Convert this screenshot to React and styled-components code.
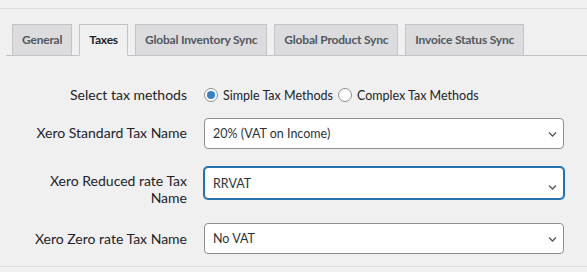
import React, { useState } from 'react';
import styled, { createGlobalStyle } from 'styled-components';

const GlobalStyle = createGlobalStyle`
    body {
        margin: 0;
        background: #f0f0f1;
        font-family: Lato, "Liberation Sans", sans-serif;
        color: #1d2327;
    }
`;

const Page = styled.div`
    padding-top: 8px;
`;

const TopRule = styled.div`
    border-top: 1px solid #dcdcde;
`;

const TabBar = styled.nav`
    display: flex;
    gap: 7px;
    margin: 15px 0 0 6px;
    padding-left: 6px;
    border-bottom: 1px solid #c3c4c7;
`;

const Tab = styled.a`
    display: block;
    height: 32px;
    box-sizing: border-box;
    padding: 0 9px;
    line-height: 30px;
    font-size: 12px;
    font-weight: 700;
    letter-spacing: -0.2px;
    text-decoration: none;
    white-space: nowrap;
    border: 1px solid #c3c4c7;
    margin-bottom: -1px;
    color: ${(p) => (p.active ? '#1d2327' : '#50575e')};
    background: ${(p) => (p.active ? '#f0f0f1' : '#dcdcde')};
    border-bottom-color: ${(p) => (p.active ? '#f0f0f1' : '#c3c4c7')};
`;

const FormTable = styled.div`
    display: grid;
    grid-template-columns: 160px 360px;
    column-gap: 17px;
    padding: 29px 0 12px 27px;
    border-bottom: 1px solid #dcdcde;
`;

const Label = styled.label`
    text-align: right;
    font-size: 14px;
    line-height: 17px;
    padding-top: ${(p) => p.offset || 0}px;
    margin-bottom: ${(p) => p.gap || 0}px;
`;

const Field = styled.div`
    position: relative;
    margin-bottom: ${(p) => p.gap || 0}px;
`;

const RadioGroup = styled.div`
    display: flex;
    align-items: center;
    height: 20px;
    font-size: 12.5px;
`;

const RadioOption = styled.label`
    display: flex;
    align-items: center;
    gap: 5px;
    margin-right: 5px;
    cursor: pointer;
`;

const RadioDot = styled.span`
    width: 14px;
    height: 14px;
    box-sizing: border-box;
    border-radius: 50%;
    border: 1px solid #8c8f94;
    background: #fff;
    display: flex;
    align-items: center;
    justify-content: center;

    &::after {
        content: '';
        width: 8px;
        height: 8px;
        border-radius: 50%;
        background: #3582c4;
        display: ${(p) => (p.checked ? 'block' : 'none')};
    }
`;

const Select = styled.select`
    appearance: none;
    display: block;
    width: 100%;
    height: ${(p) => (p.focused ? 32 : 31)}px;
    box-sizing: border-box;
    padding: 0 24px 0 8px;
    font-family: inherit;
    font-size: 12.5px;
    color: #2c3338;
    background: #fff;
    border: 1px solid ${(p) => (p.focused ? '#2271b1' : '#8c8f94')};
    border-radius: 4px;
    box-shadow: ${(p) => (p.focused ? '0 0 0 1px #2271b1' : 'none')};
    outline: none;
`;

const Chevron = styled.svg`
    position: absolute;
    right: 7px;
    top: 50%;
    margin-top: -4px;
    width: 9px;
    height: 8px;
    pointer-events: none;
`;

const taxOptions = {
    standard: ['20% (VAT on Income)', '5% (VAT on Income)', 'No VAT'],
    reduced: ['RRVAT', '20% (VAT on Income)', 'No VAT'],
    zero: ['No VAT', 'Zero Rated Income', 'RRVAT'],
};

const Dropdown = ({ options, value, focused }) => (
    <>
        <Select defaultValue={value} focused={focused ? 1 : 0}>
            {options.map((o) => (
                <option key={o} value={o}>{o}</option>
            ))}
        </Select>
        <Chevron viewBox="0 0 9 8">
            <path d="M1 2.5 L4.5 6 L8 2.5" fill="none" stroke="#50575e" strokeWidth="1.3" />
        </Chevron>
    </>
);

const tabs = ['General', 'Taxes', 'Global Inventory Sync', 'Global Product Sync', 'Invoice Status Sync'];

export default function App() {
    const [method, setMethod] = useState('simple');

    return (
        <Page>
            <GlobalStyle />
            <TopRule />
            <TabBar>
                {tabs.map((t) => (
                    <Tab key={t} href="#" active={t === 'Taxes' ? 1 : 0}>{t}</Tab>
                ))}
            </TabBar>
            <FormTable>
                <Label offset={1} gap={13}>Select tax methods</Label>
                <Field gap={13}>
                    <RadioGroup>
                        <RadioOption onClick={() => setMethod('simple')}>
                            <RadioDot checked={method === 'simple'} />
                            Simple Tax Methods
                        </RadioOption>
                        <RadioOption onClick={() => setMethod('complex')}>
                            <RadioDot checked={method === 'complex'} />
                            Complex Tax Methods
                        </RadioOption>
                    </RadioGroup>
                </Field>

                <Label offset={6} gap={18}>Xero Standard Tax Name</Label>
                <Field gap={18}>
                    <Dropdown options={taxOptions.standard} value="20% (VAT on Income)" />
                </Field>

                <Label offset={5} gap={17}>Xero Reduced rate Tax Name</Label>
                <Field gap={17}>
                    <Dropdown options={taxOptions.reduced} value="RRVAT" focused />
                </Field>

                <Label offset={7}>Xero Zero rate Tax Name</Label>
                <Field>
                    <Dropdown options={taxOptions.zero} value="No VAT" />
                </Field>
            </FormTable>
        </Page>
    );
}
